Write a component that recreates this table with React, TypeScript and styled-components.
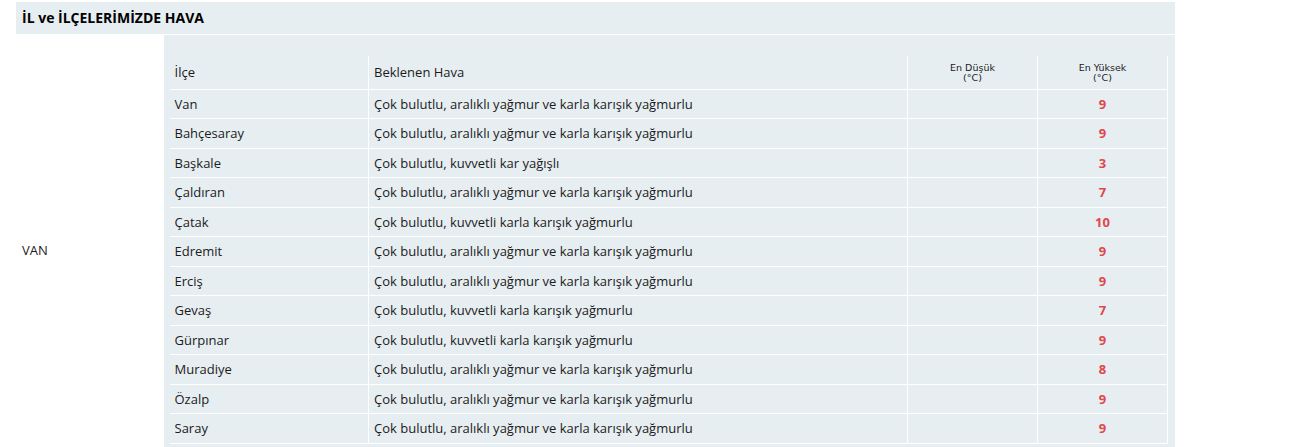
import React from "react";
import styled, { createGlobalStyle } from "styled-components";

interface ilceProps {
  name: string;
  hava: string;
  dusuk: string;
  yuksek: string;
}

const ARALIKLI = "Çok bulutlu, aralıklı yağmur ve karla karışık yağmurlu";
const KUVVETLI = "Çok bulutlu, kuvvetli karla karışık yağmurlu";

const ilceler: ilceProps[] = [
  { name: "Van", hava: ARALIKLI, dusuk: "", yuksek: "9" },
  { name: "Bahçesaray", hava: ARALIKLI, dusuk: "", yuksek: "9" },
  { name: "Başkale", hava: "Çok bulutlu, kuvvetli kar yağışlı", dusuk: "", yuksek: "3" },
  { name: "Çaldıran", hava: ARALIKLI, dusuk: "", yuksek: "7" },
  { name: "Çatak", hava: KUVVETLI, dusuk: "", yuksek: "10" },
  { name: "Edremit", hava: ARALIKLI, dusuk: "", yuksek: "9" },
  { name: "Erciş", hava: ARALIKLI, dusuk: "", yuksek: "9" },
  { name: "Gevaş", hava: KUVVETLI, dusuk: "", yuksek: "7" },
  { name: "Gürpınar", hava: KUVVETLI, dusuk: "", yuksek: "9" },
  { name: "Muradiye", hava: ARALIKLI, dusuk: "", yuksek: "8" },
  { name: "Özalp", hava: ARALIKLI, dusuk: "", yuksek: "9" },
  { name: "Saray", hava: ARALIKLI, dusuk: "", yuksek: "9" },
];

const App = () => {
  return (
    <>
      <GlobalStyle />
      <Wrapper>
        <TitleBar>İL ve İLÇELERİMİZDE HAVA</TitleBar>
        <OuterRow>
          <IlCell>VAN</IlCell>
          <TableCell>
            <Table>
              <colgroup>
                <col style={{ width: 199 }} />
                <col style={{ width: 539 }} />
                <col style={{ width: 130 }} />
                <col style={{ width: 130 }} />
              </colgroup>
              <thead>
                <tr>
                  <Th>İlçe</Th>
                  <Th>Beklenen Hava</Th>
                  <SmallTh>
                    En Düşük
                    <br />
                    (°C)
                  </SmallTh>
                  <SmallTh>
                    En Yüksek
                    <br />
                    (°C)
                  </SmallTh>
                </tr>
              </thead>
              <tbody>
                {ilceler.map((ilce) => (
                  <tr key={ilce.name}>
                    <Td>{ilce.name}</Td>
                    <Td>{ilce.hava}</Td>
                    <TempTd>{ilce.dusuk}</TempTd>
                    <TempTd $max>{ilce.yuksek}</TempTd>
                  </tr>
                ))}
              </tbody>
            </Table>
          </TableCell>
        </OuterRow>
      </Wrapper>
    </>
  );
};

export default App;

const GlobalStyle = createGlobalStyle`
  body {
    margin: 0;
    background: #fff;
    font-family: "Open Sans", "Noto Sans", sans-serif;
    color: #1b1b1b;
  }
`;

const Wrapper = styled.div`
  width: 1159px;
  margin: 2px 0 0 16px;
`;

const TitleBar = styled.div`
  height: 32px;
  line-height: 31px;
  padding-left: 6px;
  background: #e7eef1;
  font-weight: 700;
  font-size: 14px;
  color: #000;
  border-bottom: 1px solid #fff;
`;

const OuterRow = styled.div`
  display: flex;
  align-items: stretch;
`;

const IlCell = styled.div`
  width: 148px;
  padding-left: 6px;
  box-sizing: border-box;
  display: flex;
  align-items: center;
  font-size: 13px;
`;

const TableCell = styled.div`
  flex: 1;
  background: #e7eef1;
  padding: 21px 7px 22px 6px;
`;

const Table = styled.table`
  width: 998px;
  border-collapse: collapse;
  border-spacing: 0;
  table-layout: fixed;
`;

const Th = styled.th`
  height: 33px;
  box-sizing: border-box;
  padding: 0 5px;
  text-align: left;
  font-weight: 400;
  font-size: 13px;
  border-right: 1px solid #fff;
  border-bottom: 1px solid #fff;
`;

const SmallTh = styled(Th)`
  text-align: center;
  font-family: "DejaVu Sans", Verdana, sans-serif;
  font-size: 9.5px;
  line-height: 10px;
  padding-top: 2px;
`;

const Td = styled.td`
  height: 28.5px;
  padding: 0 5px;
  font-size: 13px;
  border-right: 1px solid #fff;
  border-bottom: 1px solid #fff;
  white-space: nowrap;
`;

const TempTd = styled(Td)<{ $max?: boolean }>`
  text-align: center;
  font-weight: 700;
  color: ${(p) => (p.$max ? "#e0474c" : "#2a6bb0")};
`;
